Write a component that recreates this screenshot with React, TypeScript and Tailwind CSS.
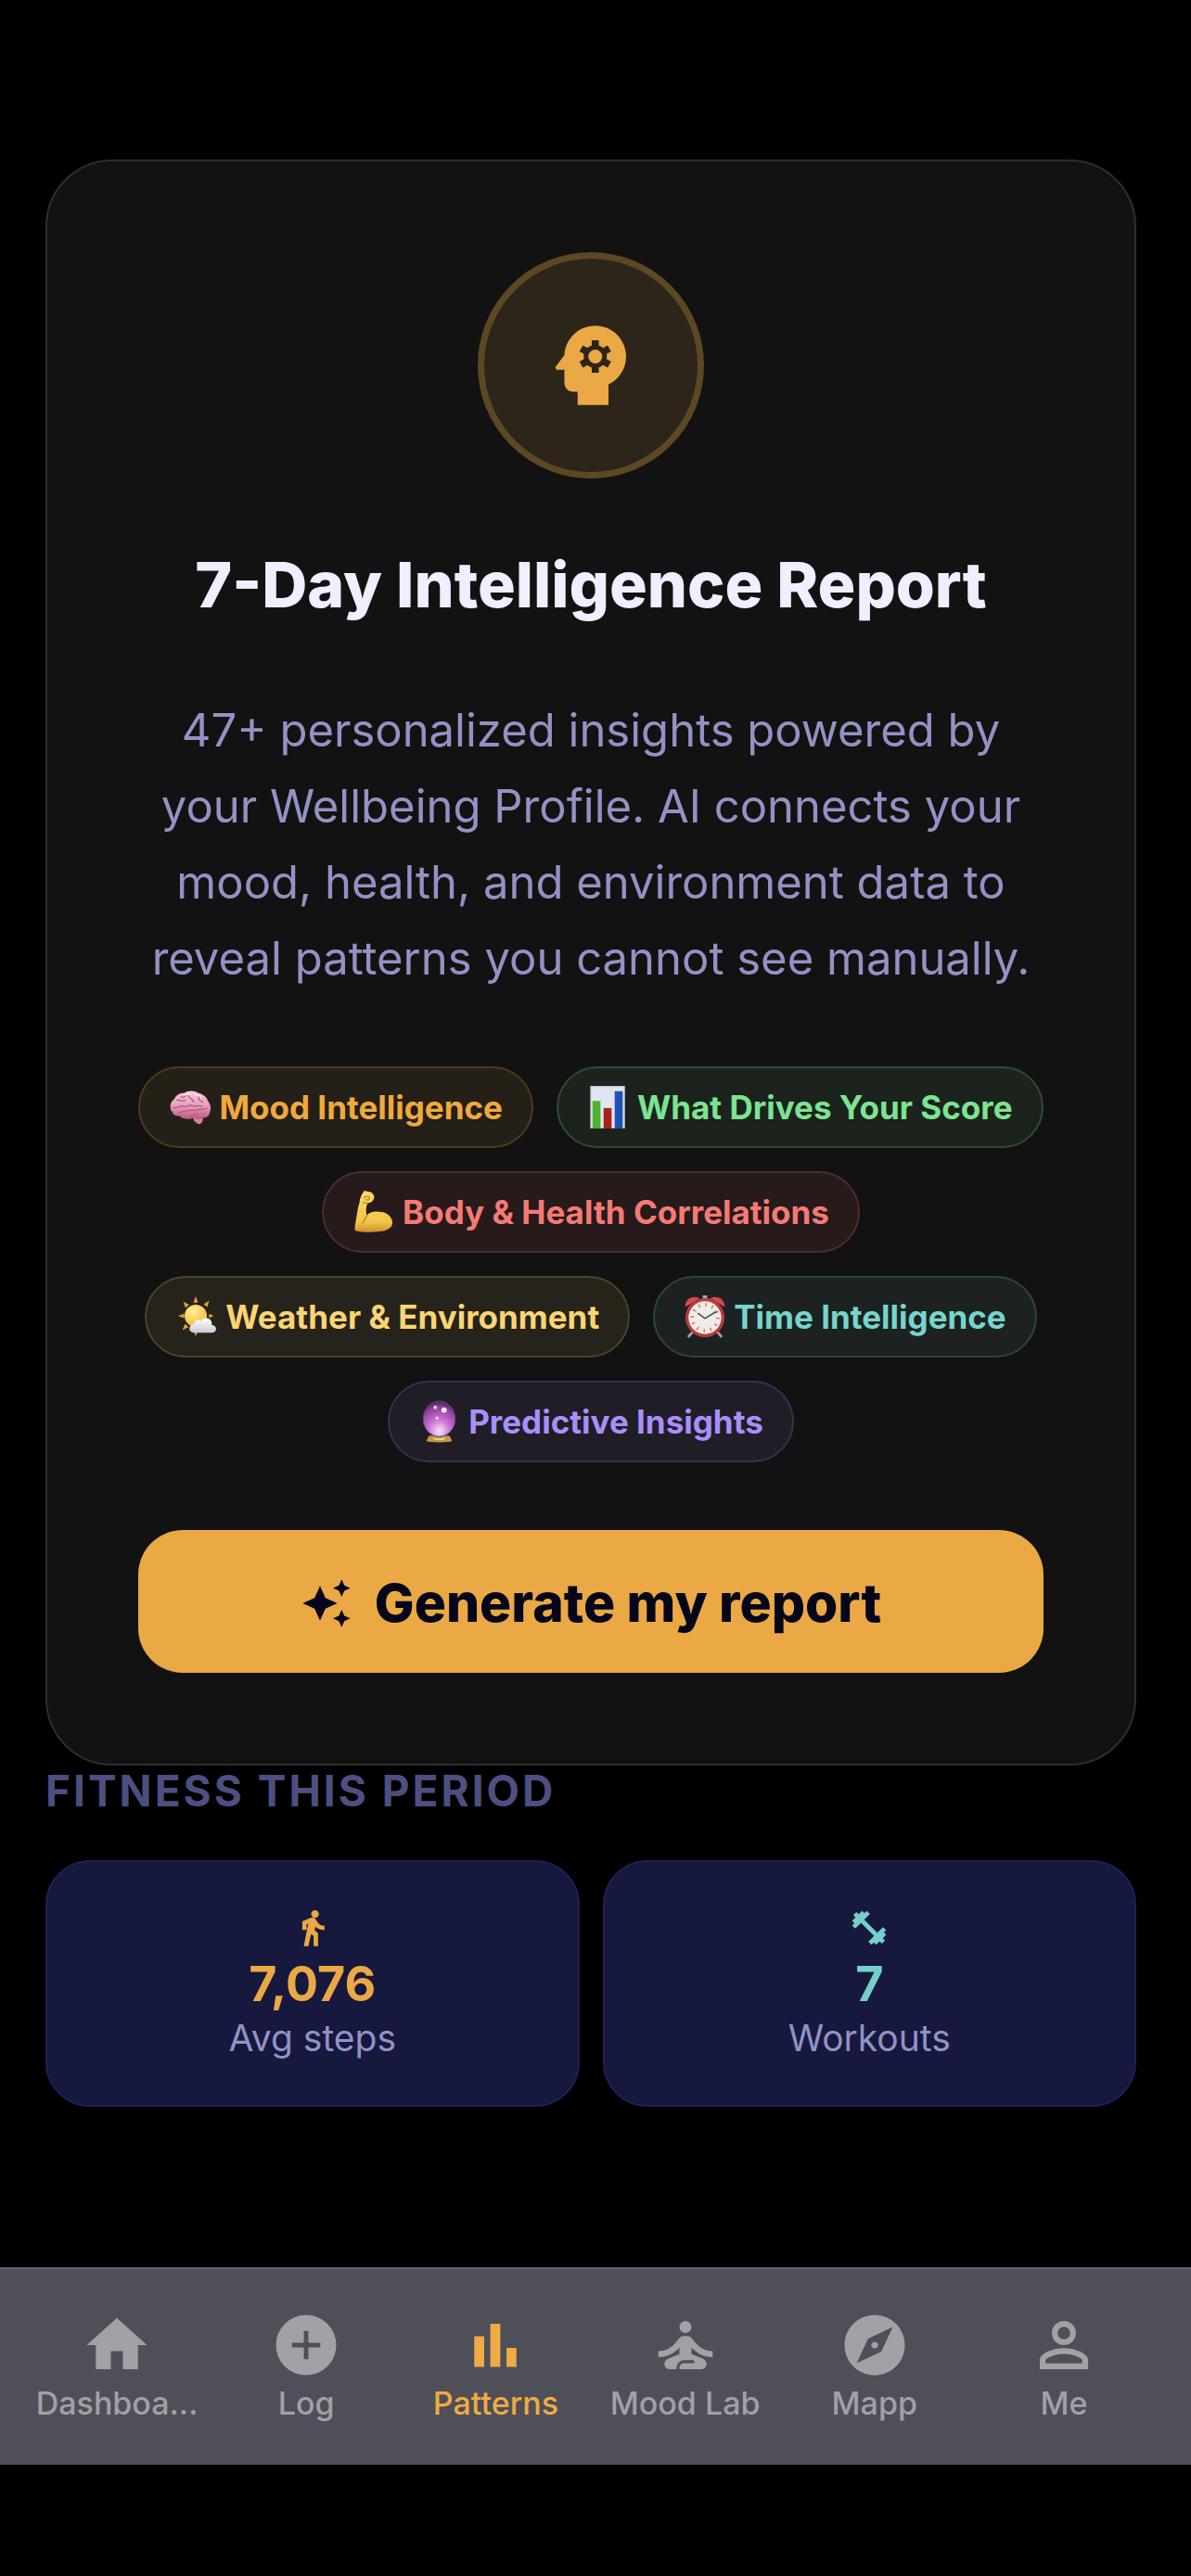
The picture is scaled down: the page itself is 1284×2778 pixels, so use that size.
import type { ReactNode } from "react";
import clsx from "clsx";
import {
  MdAutoAwesome,
  MdExplore,
  MdHome,
  MdPersonOutline,
  MdSelfImprovement,
} from "react-icons/md";

// --- Emoji drawings ---
const BrainEmoji = () => (
  <svg viewBox="0 0 48 48" className="size-[46px]" aria-hidden="true">
    <defs>
      <linearGradient id="brain" x1="0" y1="0" x2="0" y2="1">
        <stop offset="0" stopColor="#f9c9dc" />
        <stop offset="0.55" stopColor="#e79abb" />
        <stop offset="1" stopColor="#b9587f" />
      </linearGradient>
    </defs>
    <path d="M27 34c4-2 9-1 11 2 1 3-1 7-4 7-4-1-7-4-7-9z" fill="#d97f9a" />
    <path
      d="M2 25c-1-4 1-8 4-10 2-5 7-7 11-7 5-3 12-3 16 0 6 1 10 5 11 9 3 4 4 9 2 13 0 4-4 6-8 6-3 2-7 2-10 0-5 2-12 2-16-2-5 0-8-2-8-5-2-1-2-2-2-4z"
      fill="url(#brain)"
    />
    <path
      d="M5 24c4 3 7-3 11-1 3 2 6-2 10-1 4 2 7-1 12 1M11 31c3-4 7-1 10-3 4-2 7 1 11-1s7 1 11-2M9 16c4-1 6 3 10 0M22 11c1 4 5 3 6 7M35 12c-3 2-1 5 3 6M14 12c2 2 4 1 5-1M24 35c1-3 5-3 8-3"
      fill="none"
      stroke="#b75b86"
      strokeWidth="1.4"
      strokeLinecap="round"
    />
    <path d="M17 10c3-1 5 0 7-1M30 10c3 0 5 1 7 3" fill="none" stroke="#fff" strokeWidth="1.4" strokeLinecap="round" opacity="0.7" />
  </svg>
);

const ChartEmoji = () => (
  <svg viewBox="0 0 48 48" className="size-[46px]" aria-hidden="true">
    <rect x="4" y="0.5" width="38" height="47" fill="#dfe6ef" stroke="#b9bec8" />
    <rect x="6" y="17" width="9" height="31" fill="#4fb233" />
    <rect x="18.5" y="25" width="9" height="23" fill="#ab2018" />
    <rect x="31" y="6" width="9" height="42" fill="#1f52b5" />
  </svg>
);

const BicepEmoji = () => (
  <svg viewBox="0 0 48 48" className="size-[46px]" aria-hidden="true">
    <defs>
      <linearGradient id="bicep" x1="0" y1="0" x2="0" y2="1">
        <stop offset="0" stopColor="#fbd968" />
        <stop offset="0.75" stopColor="#f3c54b" />
        <stop offset="1" stopColor="#cf8f2a" />
      </linearGradient>
    </defs>
    <path
      d="M3 45c-1-3 0-7 1-12 1-7 2-14 4-20 0-4 2-8 4-11 1-2 3-2 5-1 3 0 5 1 6 3 2 2 2 5 0 7-1 2-4 3-6 3-2 4-2 9-1 14 4-5 10-5 17-4 7 1 12 7 12 12 0 6-6 9-14 10-10 1-19 1-28-1z"
      fill="url(#bicep)"
    />
    <path d="M13 8c2-2 5-2 6 0s-2 3-4 2M16 28c-1 3-2 6-5 8M17 14c-2 0-4 0-5-1" fill="none" stroke="#c98a2c" strokeWidth="1.6" strokeLinecap="round" />
  </svg>
);

const WeatherEmoji = () => (
  <svg viewBox="0 0 48 48" className="size-[46px]" aria-hidden="true">
    <defs>
      <radialGradient id="sun" cx="0.4" cy="0.3" r="0.7">
        <stop offset="0" stopColor="#fff09a" />
        <stop offset="1" stopColor="#f8b93a" />
      </radialGradient>
      <linearGradient id="cloud" x1="0" y1="0" x2="0" y2="1">
        <stop offset="0" stopColor="#ffffff" />
        <stop offset="1" stopColor="#c3cad6" />
      </linearGradient>
    </defs>
    <path
      d="M23 1l2.5 7h-5zM9 7l6.5 3.5-4 3.5zM38 6l-2 7-4-3zM3 23l7-2.5v5zM43 23l-5-2.5v5zM8 39l3-7 4 3.5zM23 46l-2.5-6h5z"
      fill="#eda42f"
    />
    <circle cx="23" cy="23" r="12.5" fill="url(#sun)" />
    <path d="M22 42c-8 0-8-9-1-10 0-4 5-6 8-3 3-6 13-4 12 4 7 1 6 9 0 9z" fill="url(#cloud)" />
  </svg>
);

const ClockEmoji = () => (
  <svg viewBox="0 0 48 48" className="size-[46px]" aria-hidden="true">
    <path d="M11 40l-6 7M37 40l6 7" stroke="#9b9ca2" strokeWidth="3" />
    <path d="M2 13C1 5 9-1 18 3zM46 13c1-8-7-14-16-10z" fill="#d64a4f" />
    <rect x="21.5" y="0" width="5" height="5" fill="#a5a6ad" />
    <circle cx="24" cy="25" r="22" fill="#b93a3a" />
    <circle cx="24" cy="25" r="18.5" fill="#f0ecea" />
    <circle cx="24" cy="25" r="14.5" fill="none" stroke="#e0605f" strokeWidth="4" strokeDasharray="1.4 6.192" />
    <path d="M16 20l8 6 13-8" fill="none" stroke="#4b4b4b" strokeWidth="1.6" />
  </svg>
);

const CrystalBallEmoji = () => (
  <svg viewBox="0 0 48 48" className="size-[46px]" aria-hidden="true">
    <defs>
      <radialGradient id="crystal" cx="0.5" cy="0.85" r="0.85">
        <stop offset="0" stopColor="#fbe3fb" />
        <stop offset="0.4" stopColor="#c873d4" />
        <stop offset="0.75" stopColor="#9a45a6" />
        <stop offset="1" stopColor="#4d2459" />
      </radialGradient>
    </defs>
    <path d="M12 40h23l3 6c-5 2-24 2-29 0z" fill="#c2973f" />
    <path d="M17 43c3 1 9 1 13 0" stroke="#f2da85" strokeWidth="2" fill="none" />
    <ellipse cx="23.5" cy="21" rx="18" ry="20" fill="url(#crystal)" stroke="#5d4a70" />
    <circle cx="29" cy="11" r="3" fill="#fff" opacity="0.9" />
    <circle cx="19" cy="8" r="2" fill="#fff" opacity="0.8" />
    <circle cx="21" cy="20" r="1.8" fill="#fff" opacity="0.7" />
  </svg>
);

// --- Icons ---
const HeadCogIcon = () => (
  <svg viewBox="0 0 24 24" className="size-[114px]" aria-hidden="true">
    <path
      d="M13 3C9.23 3 6.19 5.95 6 9.66l-1.92 2.53c-.24.31 0 .81.42.81H6v3c0 1.11.89 2 2 2h1v3h7v-4.69c2.37-1.12 4-3.51 4-6.31 0-3.86-3.12-7-7-7z"
      fill="currentColor"
    />
    <g stroke="#2d251a" fill="none">
      <circle cx="13" cy="10" r="2.1" strokeWidth="1.05" />
      <path
        d="M13 6.3v1.6M13 12.1v1.6M9.8 8.15l1.4.8M14.8 11.05l1.4.8M9.8 11.85l1.4-.8M14.8 8.95l1.4-.8"
        strokeWidth="1.6"
      />
    </g>
  </svg>
);

const WalkIcon = () => (
  <svg viewBox="0 0 24 24" className="size-[42px]" fill="currentColor" stroke="currentColor" strokeWidth="0.7" aria-hidden="true">
    <path d="M13.5 5.5c1.1 0 2-.9 2-2s-.9-2-2-2-2 .9-2 2 .9 2 2 2zM9.8 8.9L7 23h2.1l1.8-8 2.1 2v6h2v-7.5l-2.1-2 .6-3C14.8 12 16.8 13 19 13v-2c-1.9 0-3.5-1-4.3-2.4l-1-1.6c-.4-.6-1-1-1.7-1-.3 0-.5.1-.8.1L6 8.3V13h2V9.6l1.8-.7" />
  </svg>
);

const DumbbellIcon = () => (
  <svg viewBox="0 0 24 24" className="size-[42px]" fill="currentColor" stroke="currentColor" strokeWidth="0.7" aria-hidden="true">
    <path d="M20.57 14.86L22 13.43 20.57 12 17 15.57 8.43 7 12 3.43 10.57 2 9.14 3.43 7.71 2 5.57 4.14 4.14 2.71 2.71 4.14l1.43 1.43L2 7.71l1.43 1.43L2 10.57 3.43 12 7 8.43 15.57 17 12 20.57 13.43 22l1.43-1.43L16.29 22l2.14-2.14 1.43 1.43 1.43-1.43-1.43-1.43L22 16.29z" />
  </svg>
);

const PlusCircleIcon = () => (
  <svg viewBox="0 0 24 24" className="size-[78px]" aria-hidden="true">
    <circle cx="12" cy="12" r="10" fill="currentColor" />
    <path d="M12 7.3v9.4M7.3 12h9.4" stroke="#4f4f59" strokeWidth="1.5" />
  </svg>
);

const BarsIcon = () => (
  <svg viewBox="0 0 24 24" className="size-[78px]" fill="currentColor" aria-hidden="true">
    <path d="M5 9.1h3.3v10.1H5zM10.35 4.9h3.3v14.3h-3.3zM15.7 12.9H19v6.3h-3.3z" />
  </svg>
);

// --- Data ---
const topics = [
  { label: "Mood Intelligence", icon: <BrainEmoji />, style: "border-[#4f3a1c] bg-[#252017] text-[#f0a93f]" },
  { label: "What Drives Your Score", icon: <ChartEmoji />, style: "border-[#2b4c33] bg-[#1b231c] text-[#7ce493]" },
  { label: "Body & Health Correlations", icon: <BicepEmoji />, style: "border-[#502c2c] bg-[#261a1a] text-[#f57a75]" },
  { label: "Weather & Environment", icon: <WeatherEmoji />, style: "border-[#4d432a] bg-[#26231b] text-[#fbd574]" },
  { label: "Time Intelligence", icon: <ClockEmoji />, style: "border-[#2a4643] bg-[#1c2221] text-[#77d5cb]" },
  { label: "Predictive Insights", icon: <CrystalBallEmoji />, style: "border-[#382f50] bg-[#1f1d26] text-[#a98ffa]" },
];

const stats = [
  { label: "Avg steps", value: "7,076", icon: <WalkIcon />, color: "text-[#eaa945]" },
  { label: "Workouts", value: "7", icon: <DumbbellIcon />, color: "text-[#75d0c8]" },
];

const tabs = [
  { name: "Dashboard", label: "Dashboa...", icon: <MdHome className="size-[78px]" /> },
  { name: "Log", label: "Log", icon: <PlusCircleIcon /> },
  { name: "Patterns", label: "Patterns", icon: <BarsIcon />, active: true },
  { name: "Mood Lab", label: "Mood Lab", icon: <MdSelfImprovement className="size-[78px]" /> },
  { name: "Mapp", label: "Mapp", icon: <MdExplore className="size-[78px]" /> },
  { name: "Me", label: "Me", icon: <MdPersonOutline className="size-[78px]" /> },
];

function StatCard({ icon, value, label, color }: { icon: ReactNode; value: string; label: string; color: string }) {
  return (
    <div className="flex flex-1 flex-col items-center rounded-[48px] border-2 border-[#1d2055] bg-[#17183d] pt-[50px] pb-[46px]">
      <div className={clsx("flex flex-col items-center gap-2", color)}>
        {icon}
        <p className="text-[52px] leading-[64px] font-bold">{value}</p>
      </div>
      <p className="text-[39px] leading-[52px] text-[#9292c5]">{label}</p>
    </div>
  );
}

export default function App() {
  return (
    <div className="flex min-h-screen flex-col bg-black pb-[120px] font-['Inter',sans-serif]">
      <main className="flex flex-col pt-[172px] pr-[59px] pb-12 pl-[49px]">
        <section className="flex flex-col items-center rounded-[72px] border-2 border-[#2e2e2e] bg-[#121212] p-[98px] text-center">
          <div className="flex size-[244px] items-center justify-center rounded-full border-[7px] border-[#5d4725] bg-[#2d251a] text-[#eaa945]">
            <HeadCogIcon />
          </div>
          <h1 className="mt-[72px] text-[68px] leading-[84px] font-extrabold text-[#f0eeff]">
            7-Day Intelligence Report
          </h1>
          <p className="mt-[75px] text-[49px] leading-[82px] text-[#9292c5]">
            47+ personalized insights powered by your Wellbeing Profile. AI connects your mood, health, and
            environment data to reveal patterns you cannot see manually.
          </p>
          <ul className="mt-[75px] flex flex-wrap justify-center gap-[25px]">
            {topics.map((topic) => (
              <li
                key={topic.label}
                className={clsx(
                  "flex h-[88px] items-center gap-2 rounded-full border-2 px-[31px] text-[35px] font-bold whitespace-nowrap",
                  topic.style
                )}
              >
                {topic.icon}
                {topic.label}
              </li>
            ))}
          </ul>
          <button
            type="button"
            className="mt-[73px] flex h-[154px] w-full items-center justify-center gap-6 rounded-[48px] bg-[#eaa945] pt-1 text-[57px] font-extrabold text-[#06061a]"
          >
            <MdAutoAwesome className="size-14" />
            Generate my report
          </button>
        </section>

        <h2 className="text-[46px] leading-[54px] font-bold tracking-[3px] text-[#4d4f80] uppercase">
          Fitness this period
        </h2>
        <div className="mt-12 flex gap-[25px]">
          {stats.map((stat) => (
            <StatCard key={stat.label} {...stat} />
          ))}
        </div>
      </main>

      <nav className="mt-auto flex border-t-2 border-[#62626b] bg-[#4f4f59] pt-[43px] pr-[35px] pb-[42px] pl-6">
        {tabs.map((tab) => (
          <a
            key={tab.name}
            href="#"
            aria-label={tab.name}
            aria-current={tab.active ? "page" : undefined}
            className={clsx(
              "flex min-w-0 flex-1 flex-col items-center",
              tab.active ? "text-[#f0ab42]" : "text-[#a1a1a6]"
            )}
          >
            {tab.icon}
            <span className="text-[34px] leading-[48px] font-medium">{tab.label}</span>
          </a>
        ))}
      </nav>
    </div>
  );
}
